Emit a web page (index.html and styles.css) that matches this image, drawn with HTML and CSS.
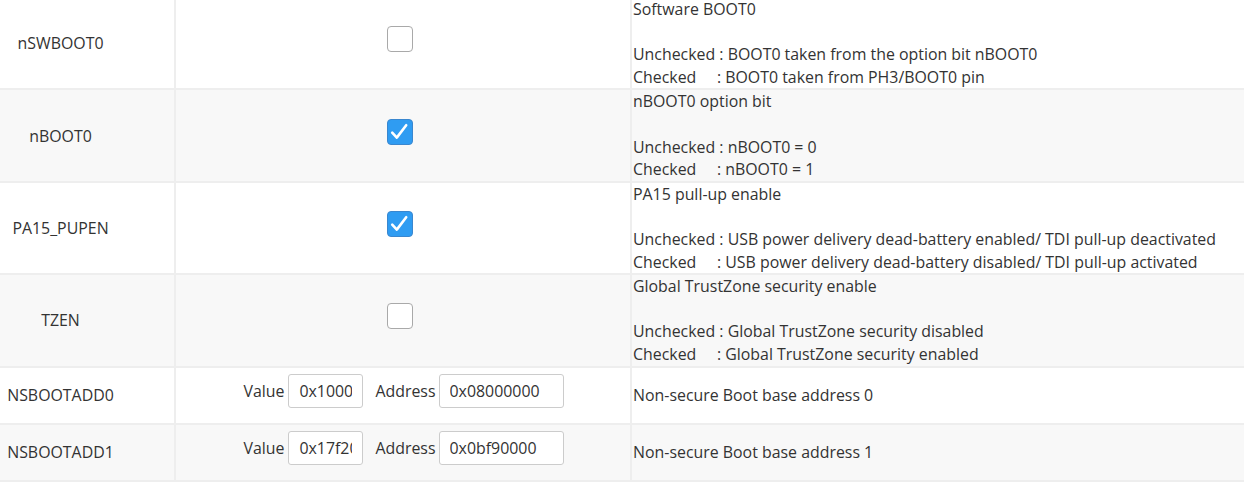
FILE: index.html
```html
<!DOCTYPE html>
<html>
<head>
<meta charset="utf-8">
<link rel="stylesheet" href="styles.css">
</head>
<body>
<table class="opts">
  <colgroup>
    <col class="c-name">
    <col class="c-ctrl">
    <col class="c-desc">
  </colgroup>
  <tr class="row">
    <td class="name"><span class="lbl">nSWBOOT0</span></td>
    <td class="ctrl"><span class="cb"></span></td>
    <td class="desc">
      <div class="ln">Software BOOT0</div>
      <div class="ln">&nbsp;</div>
      <div class="ln">Unchecked : BOOT0 taken from the option bit nBOOT0</div>
      <div class="ln">Checked     : BOOT0 taken from PH3/BOOT0 pin</div>
    </td>
  </tr>
  <tr class="row alt">
    <td class="name"><span class="lbl">nBOOT0</span></td>
    <td class="ctrl"><span class="cb on"><svg viewBox="0 0 26 26" width="26" height="26"><path d="M6.2 14.6 L10.8 19.6 L20.2 7.2" fill="none" stroke="#fff" stroke-width="2.6" stroke-linecap="round" stroke-linejoin="round"/></svg></span></td>
    <td class="desc">
      <div class="ln">nBOOT0 option bit</div>
      <div class="ln">&nbsp;</div>
      <div class="ln">Unchecked : nBOOT0 = 0</div>
      <div class="ln">Checked     : nBOOT0 = 1</div>
    </td>
  </tr>
  <tr class="row">
    <td class="name"><span class="lbl">PA15_PUPEN</span></td>
    <td class="ctrl"><span class="cb on"><svg viewBox="0 0 26 26" width="26" height="26"><path d="M6.2 14.6 L10.8 19.6 L20.2 7.2" fill="none" stroke="#fff" stroke-width="2.6" stroke-linecap="round" stroke-linejoin="round"/></svg></span></td>
    <td class="desc">
      <div class="ln">PA15 pull-up enable</div>
      <div class="ln">&nbsp;</div>
      <div class="ln">Unchecked : USB power delivery dead-battery enabled/ TDI pull-up deactivated</div>
      <div class="ln">Checked     : USB power delivery dead-battery disabled/ TDI pull-up activated</div>
    </td>
  </tr>
  <tr class="row alt">
    <td class="name"><span class="lbl">TZEN</span></td>
    <td class="ctrl"><span class="cb"></span></td>
    <td class="desc">
      <div class="ln">Global TrustZone security enable</div>
      <div class="ln">&nbsp;</div>
      <div class="ln">Unchecked : Global TrustZone security disabled</div>
      <div class="ln">Checked     : Global TrustZone security enabled</div>
    </td>
  </tr>
  <tr class="row">
    <td class="name"><span class="lbl">NSBOOTADD0</span></td>
    <td class="ctrl addr">
      <div class="fields">
        <span class="flbl">Value</span><input class="inp val" type="text" value="0x100000">
        <span class="flbl gap">Address</span><input class="inp adr" type="text" value="0x08000000">
      </div>
    </td>
    <td class="desc one">Non-secure Boot base address 0</td>
  </tr>
  <tr class="row alt">
    <td class="name"><span class="lbl">NSBOOTADD1</span></td>
    <td class="ctrl addr">
      <div class="fields">
        <span class="flbl">Value</span><input class="inp val" type="text" value="0x17f200">
        <span class="flbl gap">Address</span><input class="inp adr" type="text" value="0x0bf90000">
      </div>
    </td>
    <td class="desc one">Non-secure Boot base address 1</td>
  </tr>
</table>
</body>
</html>
```
FILE: styles.css
```css
html, body {
  margin: 0;
  padding: 0;
  background: #ffffff;
}
body {
  font-family: "Open Sans", "Noto Sans", sans-serif;
  font-size: 15.9px;
  color: #333333;
}
.opts {
  width: 100%;
  table-layout: fixed;
  border-collapse: collapse;
  margin-top: -2px;
}
.c-name { width: 175px; }
.c-ctrl { width: 456px; }
.opts td {
  border: 2px solid #eeeeee;
  padding: 0;
  vertical-align: middle;
}
.opts tr:first-child td { border-top: none; }
.opts td:first-child { border-left: none; }
.opts td:last-child { border-right: none; }
.row { background: #ffffff; }
.row.alt { background: #f8f8f8; }
.name {
  text-align: center;
  padding-right: 53px !important;
}
.ctrl {
  text-align: center;
  padding-bottom: 8px !important;
}
.cb {
  display: inline-block;
  box-sizing: border-box;
  width: 26px;
  height: 26px;
  border: 1.5px solid #a9a9a9;
  border-radius: 4px;
  background: #ffffff;
  vertical-align: middle;
  margin-right: 7px;
  position: relative;
}
.cb.on {
  background: #2f9cf2;
  border-color: #3a87cf;
}
.cb svg {
  position: absolute;
  left: -1.5px;
  top: -1.5px;
}
.desc {
  padding-left: 1px !important;
  line-height: 22.6px;
}
.ln { white-space: pre; }
.addr {
  padding-top: 6px !important;
  padding-bottom: 15px !important;
}
.fields {
  display: flex;
  justify-content: center;
  align-items: center;
  padding-left: 1px;
}
.flbl { margin-right: 4px; }
.flbl.gap { margin-left: 12px; margin-right: 3px; }
.inp {
  box-sizing: border-box;
  height: 34px;
  border: 1px solid #cccccc;
  border-radius: 3px;
  padding: 0 10px;
  font-family: "Open Sans", "Noto Sans", sans-serif;
  font-size: 15.9px;
  color: #333333;
  background: #ffffff;
  outline: none;
}
.inp.val { width: 75px; }
.inp.adr { width: 125px; }
```
